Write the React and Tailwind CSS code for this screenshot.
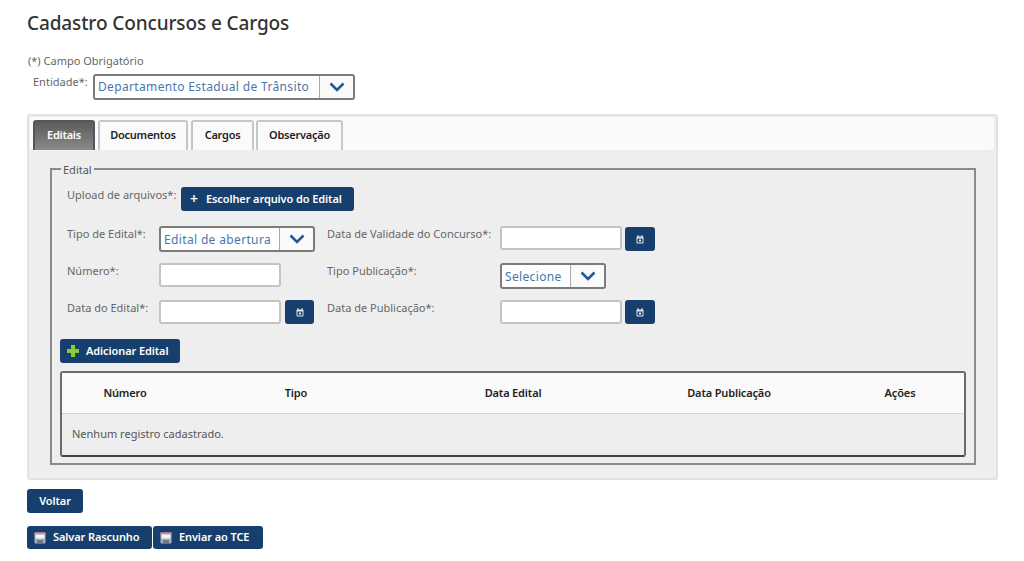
const FONT = "font-['Noto_Sans',sans-serif]";

function Chevron() {
  return (
    <svg width="16" height="10" viewBox="0 0 16 10" fill="none" aria-hidden="true">
      <path d="M1.5 1.5 L8 8 L14.5 1.5" stroke="#1f5a94" strokeWidth="2.6" />
    </svg>
  );
}

function Select({ text, textW }) {
  return (
    <div className="flex h-[26px] rounded-[3px] border-2 border-[#7b7b7b] bg-white">
      <div className={`flex items-center whitespace-nowrap pl-[3px] text-[12px] text-[#4a76ac] tracking-[0.35px] ${textW}`}>{text}</div>
      <div className="flex w-[34px] items-center justify-center border-l border-[#a9a9a9] bg-[#fafafa] rounded-r-[3px]">
        <Chevron />
      </div>
    </div>
  );
}

function Calendar({ className = "ml-[3px] w-[30px]" }) {
  return (
    <button className={`flex h-6 items-center justify-center rounded-[3px] bg-[#173f6d] ${className}`}>
      <svg width="8" height="9" viewBox="0 0 8 9" aria-hidden="true">
        <rect x="0.5" y="1.5" width="7" height="7" rx="1" fill="#e6ebf1" />
        <rect x="1.5" y="0" width="1" height="2" fill="#e6ebf1" />
        <rect x="5.5" y="0" width="1" height="2" fill="#e6ebf1" />
        <rect x="1.5" y="3.5" width="5" height="4" fill="#173f6d" />
        <rect x="3" y="4.5" width="2" height="2" fill="#e6ebf1" />
      </svg>
    </button>
  );
}

function Input() {
  return <input className="h-6 w-[122px] rounded-[3px] border-2 border-[#c4c4c4] bg-white" />;
}

function Label({ children, w }) {
  return <label className={`whitespace-nowrap text-[11px] leading-4 text-[#666] ${w}`}>{children}</label>;
}

function Tab({ children, active, w }) {
  return (
    <div
      className={`flex h-[30px] items-center justify-center rounded-t-[3px] border-2 border-b-0 pb-[2px] text-[11px] font-semibold tracking-[-0.25px] ${w} ${
        active
          ? "border-[#555] bg-gradient-to-b from-[#5b5b5b] to-[#8a8a8a] text-white"
          : "border-[#c6c6c6] bg-[#fafafa] text-[#222]"
      }`}
    >
      {children}
    </div>
  );
}

function SaveIcon() {
  return (
    <svg width="12" height="12" viewBox="0 0 12 12" aria-hidden="true">
      <rect x="0.5" y="0.5" width="11" height="11" rx="1" fill="#a8b0bb" />
      <rect x="0.5" y="0.5" width="11" height="2" fill="#d98c94" />
      <rect x="1.5" y="2.5" width="9" height="4" fill="#f4f4f4" />
      <rect x="3" y="8" width="6" height="3.5" fill="#6f7885" />
    </svg>
  );
}

function Btn({ children, className = "" }) {
  return (
    <button
      className={`flex items-center whitespace-nowrap rounded-[3px] bg-[#173f6d] text-[11px] font-semibold tracking-[-0.1px] text-white ${className}`}
    >
      {children}
    </button>
  );
}

export default function App() {
  return (
    <div className={`${FONT} h-[561px] w-[1024px] overflow-hidden bg-white px-[27px] pt-[9px] text-[#555]`}>
      <h1 className="h-[28px] text-[19px] font-medium leading-[28px] tracking-[-0.12px] text-[#333]">Cadastro Concursos e Cargos</h1>

      <p className="mt-[16px] pl-[1px] text-[11px] leading-4 text-[#666]">(*) Campo Obrigatório</p>

      <div className="mt-[5px] flex pl-[6px]">
        <Label w="w-[60px]">Entidade*:</Label>
        <Select text="Departamento Estadual de Trânsito" textW="w-[224px]" />
      </div>

      <div className="mt-[14px] h-[366px] w-[971px] rounded-[3px] border-2 border-[#e2e2e2] bg-[#eeeeee]">
        <div className="ml-[1px] mr-[2px] mt-[1px] flex h-[33px] gap-[3px] rounded-[3px] bg-[#fafafa] pl-[3px] pt-[3px]">
          <Tab active w="w-[62px]">Editais</Tab>
          <Tab w="w-[90px]">Documentos</Tab>
          <Tab w="w-[63px]">Cargos</Tab>
          <div className="-ml-[1px]"><Tab w="w-[87px]">Observação</Tab></div>
        </div>

        <fieldset className="mx-[21px] mt-[10px] h-[305px] w-[924px] border-2 border-[#8a8a8a] px-[8px]">
          <legend className="ml-[1px] px-[2px] pt-[2px] text-[11px] leading-4 text-[#555]">Edital</legend>

          <div className="ml-[7px] flex items-start pt-[9px]">
            <Label w="w-[114px]">Upload de arquivos*:</Label>
            <Btn className="h-6 w-[173px] pl-[9px]">
              <span className="mr-[8px] text-[14px] leading-none">+</span>
              Escolher arquivo do Edital
            </Btn>
          </div>

          <div className="ml-[7px] mt-[15px] flex items-start">
            <Label w="w-[92px]">Tipo de Edital*:</Label>
            <div className="[&>div>div:first-child]:pt-[2px]">
              <Select text="Edital de abertura" textW="w-[118px]" />
            </div>
            <div className="ml-[12px]"><Label w="block w-[173px]">Data de Validade do Concurso*:</Label></div>
            <Input />
            <Calendar className="ml-[3px] mt-[1px] w-[30px]" />
          </div>

          <div className="ml-[7px] mt-[11px] flex items-start">
            <Label w="w-[92px]">Número*:</Label>
            <Input />
            <div className="ml-[46px]"><Label w="block w-[173px]">Tipo Publicação*:</Label></div>
            <div className="[&>div>div:first-child]:pt-[1px]">
              <Select text="Selecione" textW="w-[68px]" />
            </div>
          </div>

          <div className="ml-[7px] mt-[11px] flex items-start">
            <Label w="w-[92px]">Data do Edital*:</Label>
            <Input />
            <Calendar className="ml-[4px] w-[29px]" />
            <div className="ml-[13px]"><Label w="block w-[173px]">Data de Publicação*:</Label></div>
            <Input />
            <Calendar />
          </div>

          <Btn className="mt-[15px] h-6 w-[120px] pl-[6px]">
            <svg className="mr-[6px]" width="14" height="14" viewBox="0 0 14 14" aria-hidden="true">
              <path d="M5 1h4v4h4v4H9v4H5V9H1V5h4z" fill="#8fc93a" />
            </svg>
            Adicionar Edital
          </Btn>

          <div className="mt-2 h-[86px] w-[906px] overflow-hidden rounded-[3px] border-2 border-[#6b6b6b] border-b-[#444]">
            <table className="w-full table-fixed text-[11px]">
              <thead>
                <tr className="h-[40px] border-b border-[#d5d5d5] bg-[#fafafa] tracking-[-0.15px] text-[#222]">
                  <th className="w-[126px] font-semibold">Número</th>
                  <th className="w-[216px] font-semibold">Tipo</th>
                  <th className="w-[218px] font-semibold">Data Edital</th>
                  <th className="w-[214px] font-semibold">Data Publicação</th>
                  <th className="font-semibold">Ações</th>
                </tr>
              </thead>
              <tbody>
                <tr className="h-[42px]">
                  <td colSpan={5} className="pl-[10px] text-[#555]">Nenhum registro cadastrado.</td>
                </tr>
              </tbody>
            </table>
          </div>
        </fieldset>
      </div>

      <Btn className="mt-[9px] h-6 w-[56px] justify-center">Voltar</Btn>

      <div className="mt-[13px] flex gap-[1px]">
        <Btn className="h-[23px] w-[125px] pl-[7px]">
          <span className="mr-[7px]"><SaveIcon /></span>
          Salvar Rascunho
        </Btn>
        <Btn className="h-[23px] w-[110px] pl-[7px]">
          <span className="mr-[7px]"><SaveIcon /></span>
          Enviar ao TCE
        </Btn>
      </div>
    </div>
  );
}
